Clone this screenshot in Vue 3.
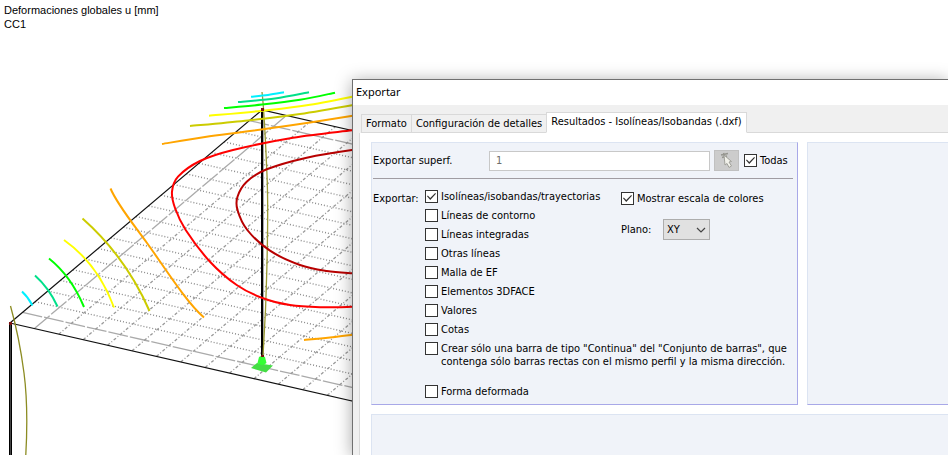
<script setup>
import { ref } from 'vue'

// Slab grid: 20 divisions along the left edge, 24.4 px steps along the front edge
const left = { x: 10, y: 323 }
const top = { x: 262, y: 110 }
const slope = 0.228
const reach = 420

const longLines = []
for (let i = 1; i < 20; i++) {
  const x = left.x + (12.6 * i)
  const y = left.y - (10.65 * i)
  longLines.push({ x1: x, y1: y, x2: reach, y2: y + (reach - x) * slope, axis: i === 1 || i === 19 })
}
const crossLines = []
for (let j = 1; j < 16; j++) {
  const dx = 24.4 * j
  crossLines.push({
    x1: left.x + dx, y1: left.y + dx * slope,
    x2: top.x + dx, y2: top.y + dx * slope,
    axis: j === 1,
  })
}

// Smooth curve through a list of points
function curve(p) {
  let d = `M${p[0][0]} ${p[0][1]}`
  for (let i = 0; i < p.length - 1; i++) {
    const a = p[i - 1] || p[i]
    const b = p[i]
    const c = p[i + 1]
    const e = p[i + 2] || c
    d += ` C${b[0] + (c[0] - a[0]) / 6} ${b[1] + (c[1] - a[1]) / 6} ${c[0] - (e[0] - b[0]) / 6} ${c[1] - (e[1] - b[1]) / 6} ${c[0]} ${c[1]}`
  }
  return d
}

const arcs = [
  { color: '#00f0ff', d: 'M22 291.500Q28 297 32.500 305.500' },
  { color: '#00e08a', d: 'M35 275.500Q49 288 57.500 306.500' },
  { color: '#00ff00', d: 'M49 258.500Q71 276 84 307' },
  { color: '#ffff00', d: 'M64 240Q98 264 114 307.500' },
  { color: '#cccc00', d: 'M82.500 218.500Q126 257 149.500 311' },
  { color: '#ffa500', d: 'M110.500 188.500C117 204 131 221 147 243S186 302 204 317.500' },
]
const isolines = [
  { color: '#00f0ff', pts: [[251, 96.7], [268, 95], [284, 92.3]] },
  { color: '#00e08a', pts: [[238, 102], [275, 98.5], [309, 92.3]] },
  { color: '#00ff00', pts: [[224, 108], [262, 104.6], [300, 99.8], [335, 92.7]] },
  { color: '#ffff00', pts: [[209, 115.7], [262, 110.8], [310, 104.8], [370, 93]] },
  { color: '#cccc00', pts: [[190, 126], [245, 120.7], [300, 114], [370, 102]] },
  { color: '#ffa500', pts: [[162, 144], [205, 137], [250, 131], [310, 122.5], [370, 113]] },
  { color: '#ff0000', pts: [[370, 128], [352, 130.3], [293, 137.7], [233, 150], [200, 161], [178, 176.7], [172, 191.7], [175, 208], [185.7, 230], [210, 261.7], [236.7, 285], [261.7, 297.7], [290, 305], [320, 307.2], [352, 306.8], [370, 306]] },
  { color: '#b80000', pts: [[370, 149], [352, 150], [306.7, 157.7], [266.7, 169.3], [246.7, 181.7], [237.5, 196.7], [237.5, 210], [247.3, 230], [270, 250.7], [300, 265], [326.7, 271], [352, 273.3], [370, 274]] },
  { color: '#ffa500', pts: [[304, 340], [330, 337.6], [370, 332.5]] },
]

const items = ref([
  { id: 'iso', label: 'Isolíneas/isobandas/trayectorias', on: true },
  { id: 'contorno', label: 'Líneas de contorno', on: false },
  { id: 'integradas', label: 'Líneas integradas', on: false },
  { id: 'otras', label: 'Otras líneas', on: false },
  { id: 'malla', label: 'Malla de EF', on: false },
  { id: 'face', label: 'Elementos 3DFACE', on: false },
  { id: 'valores', label: 'Valores', on: false },
  { id: 'cotas', label: 'Cotas', on: false },
])
const todas = ref(true)
const escala = ref(true)
const continua = ref(false)
const deformada = ref(false)
const superficie = ref('1')
const plano = ref('XY')
</script>

<template>
  <main class="workspace">
    <svg class="model" viewBox="0 0 420 460" width="420" height="460" aria-hidden="true">
      <g fill="none">
        <g class="grid">
          <line v-for="(l, i) in longLines" :key="'a' + i" :x1="l.x1" :y1="l.y1" :x2="l.x2" :y2="l.y2" :class="l.axis ? 'axis' : 'dots'" />
          <line v-for="(l, i) in crossLines" :key="'b' + i" :x1="l.x1" :y1="l.y1" :x2="l.x2" :y2="l.y2" :class="l.axis ? 'axis' : 'dashes'" />
        </g>
        <path d="M420 416.500L10 323L262 110L420 146" stroke="#111" stroke-width="1.200" />
        <path d="M10.500 323V460" stroke="#000" stroke-width="3" />
        <path d="M262 110V356" stroke="#000" stroke-width="2" />
        <path d="M263.500 110V356" stroke="#aaa" stroke-width="1" />
        <path d="M10.500 323V460" stroke="#444" stroke-width="1" />
        <path d="M262 92C264 108 265.500 140 267 175S267 270 265.500 310L263 356" stroke="#999933" stroke-width="1.300" />
        <path d="M10.500 306C15 322 21 350 24 373S28 420 25.500 460" stroke="#8c8c22" stroke-width="1.300" />
        <path v-for="(c, i) in arcs" :key="'q' + i" :d="c.d" :stroke="c.color" stroke-width="2" />
        <path v-for="(c, i) in isolines" :key="i" :d="curve(c.pts)" :stroke="c.color" stroke-width="2" />
      </g>
      <path d="M251 368L257 363L273 365.500L266 372.500Z" fill="#44dd44" />
      <path d="M259 357Q262 355 265 357L266.500 363Q262 367 257.500 363Z" fill="#33ff33" />
      <g fill="#7a1010">
        <rect x="9" y="322" width="3" height="3" />
        <rect x="261" y="108" width="3" height="3" />
        <rect x="261" y="355" width="3" height="2" />
      </g>
    </svg>

    <header class="caption">
      <div>Deformaciones globales u [mm]</div>
      <div>CC1</div>
    </header>

    <section class="dialog" role="dialog" aria-labelledby="dlg-title">
      <h1 id="dlg-title" class="title">Exportar</h1>
      <div class="tabs" role="tablist">
        <button type="button" role="tab" class="tab">Formato</button>
        <button type="button" role="tab" class="tab">Configuración de detalles</button>
        <button type="button" role="tab" class="tab active" aria-selected="true">Resultados - Isolíneas/Isobandas (.dxf)</button>
        <span class="rest"></span>
      </div>

      <div class="sheet">
        <div class="group main">
          <div class="surface">
            <label for="superf" class="surface-label">Exportar superf.</label>
            <input id="superf" v-model="superficie" type="text" class="text" />
            <button type="button" class="pick" aria-label="Seleccionar">
              <svg viewBox="0 0 25 21" width="25" height="21" aria-hidden="true">
                <path d="M7 5L14 3.500M8 7.500L13 6M9.500 3L11 8" stroke="#96968f" stroke-width="1.500" />
                <path d="M10 5L17.500 11.500L15 12L17.500 16L15 17.500L13 13.500L11 15Z" fill="#f1f1ea" stroke="#a0a09a" stroke-width="1" />
              </svg>
            </button>
            <label class="check todas"><input v-model="todas" type="checkbox" /><span>Todas</span></label>
          </div>

          <div class="options">
            <span class="heading">Exportar:</span>
            <div class="list">
              <label v-for="it in items" :key="it.id" class="check"><input v-model="it.on" type="checkbox" /><span>{{ it.label }}</span></label>
            </div>
            <div class="side">
              <label class="check"><input v-model="escala" type="checkbox" /><span>Mostrar escala de colores</span></label>
              <div class="plane">
                <label for="plano">Plano:</label>
                <span class="select">
                  <select id="plano" v-model="plano">
                    <option>XY</option>
                    <option>XZ</option>
                    <option>YZ</option>
                  </select>
                  <svg viewBox="0 0 10 6" width="10" height="6" aria-hidden="true"><path d="M1 1L5 5L9 1" fill="none" stroke="#444" stroke-width="1.200" /></svg>
                </span>
              </div>
            </div>
            <div class="extra">
              <label class="check note"><input v-model="continua" type="checkbox" /><span>Crear sólo una barra de tipo "Continua" del "Conjunto de barras", que<br />contenga sólo barras rectas con el mismo perfil y la misma dirección.</span></label>
              <label class="check"><input v-model="deformada" type="checkbox" /><span>Forma deformada</span></label>
            </div>
          </div>
        </div>
        <div class="group"></div>
        <div class="group wide"></div>
      </div>
    </section>
  </main>
</template>

<style>
body {
  overflow: hidden;
  background: #fff;
}
</style>

<style scoped>
.workspace {
  position: relative;
  min-height: 100vh;
  overflow: hidden;
  color: #000;
  font: 11px/13px "DejaVu Sans Condensed", "Noto Sans", sans-serif;
}
.model {
  position: absolute;
  left: 0;
  top: 0;
}
.grid line { stroke: #8c8c8c; }
.grid .dots { stroke-dasharray: 1 2; stroke-width: 1.4; }
.grid .dashes { stroke: #999; stroke-dasharray: 3 2 1 2; stroke-width: 1.3; }
.grid .axis { stroke: #aaa; stroke-dasharray: 20 2; stroke-width: 1.3; }
.caption {
  position: relative;
  padding: 3px 4px;
  font: 11px/14px "Liberation Sans", Arial, sans-serif;
}
.dialog {
  position: absolute;
  left: 352px;
  right: 0;
  top: 79px;
  bottom: 0;
  display: flex;
  flex-direction: column;
  background: #f0f0f0;
  border-left: 1px solid #707070;
  border-top: 1px solid #707070;
  box-shadow: 0 2px 16px rgba(0, 0, 0, 0.35);
}
.title {
  margin: 0;
  padding: 0 3px;
  height: 25px;
  background: #fff;
  font: 11px/24px "Noto Sans", sans-serif;
}
.tabs {
  display: flex;
  align-items: flex-end;
  padding: 7px 0 0 6px;
  border: 0;
}
.tab {
  height: 19px;
  padding: 0 4px;
  border: 1px solid #d9d9d9;
  border-right: 0;
  background: #f0f0f0;
  color: inherit;
  font: inherit;
  white-space: nowrap;
}
.tab:first-child { margin-left: 2px; }
.tab.active {
  height: 21px;
  padding: 0 4px 2px;
  background: #fff;
  border-right: 1px solid #d9d9d9;
  border-bottom-color: #fff;
}
.rest {
  flex: 1;
  border-bottom: 1px solid #d9d9d9;
}
.sheet {
  flex: 1;
  display: grid;
  grid-template-columns: 427px 1fr;
  grid-template-rows: auto 1fr;
  gap: 9px;
  margin-left: 6px;
  padding: 9px 0 0 11px;
  background: #fff;
  border-left: 1px solid #d9d9d9;
}
.group {
  background: #f0f3f9;
  border: 1px solid;
  border-color: #dce4f2 #a8a8e8 #a8a8e8 #dce4f2;
}
.group:not(.main) { border-right: 0; }
.group.wide {
  grid-column: 1 / -1;
  border-bottom: 0;
}
.main { padding: 7px 4px 3px 1px; }
.surface {
  display: flex;
  align-items: center;
  padding-bottom: 7px;
  border-bottom: 1px solid #a09ca2;
}
.surface-label { width: 116px; }
.text {
  flex: 1;
  min-width: 0;
  height: 20px;
  box-sizing: border-box;
  padding: 0 6px;
  border: 1px solid #c8c8c8;
  background: #fff;
  color: #6d6d6d;
  font: inherit;
}
.pick {
  width: 25px;
  height: 21px;
  margin: 0 5px 0 4px;
  padding: 0;
  border: 0;
  background: #ccc;
  outline: 1px solid #c0c0c0;
  outline-offset: -1px;
}
.pick svg { display: block; }
.todas { width: 49px; }
.options {
  display: grid;
  grid-template-columns: 52px 196px 1fr;
  padding-top: 8px;
}
.heading { padding-top: 5px; }
.check {
  display: flex;
  align-items: center;
  gap: 3px;
  height: 19px;
  white-space: nowrap;
}
.check input {
  flex: none;
  appearance: none;
  display: grid;
  place-content: center;
  width: 13px;
  height: 13px;
  margin: 0;
  border: 1px solid #333;
  background: #fff;
}
.check input:checked::before {
  content: "";
  width: 9px;
  height: 7px;
  background: #333;
  clip-path: polygon(0 45%, 9% 36%, 36% 72%, 91% 0, 100% 10%, 36% 100%);
}
.side { padding-top: 2px; }
.plane {
  display: flex;
  align-items: center;
  justify-content: space-between;
  width: 89px;
  padding-top: 11px;
}
.select {
  display: flex;
  align-items: center;
  width: 47px;
}
.select select {
  appearance: none;
  width: 47px;
  height: 21px;
  padding: 0 3px;
  border: 1px solid #adadad;
  border-radius: 0;
  background: #e1e1e1;
  color: inherit;
  font: inherit;
}
.select svg {
  flex: none;
  margin-left: -14px;
  pointer-events: none;
}
.extra { grid-column: 2 / -1; }
.note {
  align-items: flex-start;
  height: 40px;
  padding-top: 3px;
}
</style>
